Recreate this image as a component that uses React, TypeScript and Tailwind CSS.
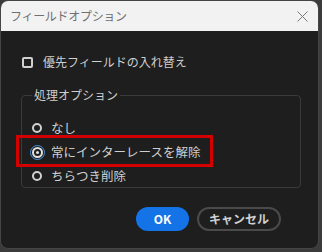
import React, { useState } from 'react';

const options = ['なし', '常にインターレースを解除', 'ちらつき削除'];

const App: React.FC = () => {
    const [swap, setSwap] = useState(false);
    const [mode, setMode] = useState(1);

    return (
        <div className="w-[322px] h-[252px] bg-[#3b3b3b] overflow-hidden font-['Noto_Sans_CJK_JP',sans-serif]">
            <div className="relative w-[319px] h-[249px] flex flex-col rounded-[8px] overflow-hidden border border-[#454545] bg-[#1e1e1e]">
                <div className="h-[30px] shrink-0 bg-[#f2f2f2] flex items-center justify-between pl-[9px] pr-[10px]">
                    <span className="text-[12px] text-[#707070] tracking-[-0.3px]">フィールドオプション</span>
                    <svg width="11" height="11" viewBox="0 0 11 11" className="text-[#7a7a7a]">
                        <path d="M0.5 0.5 L10.5 10.5 M10.5 0.5 L0.5 10.5" stroke="currentColor" strokeWidth="1" />
                    </svg>
                </div>

                <div className="flex-1 flex flex-col px-[20px] pt-[25px]">
                    <label className="flex items-center gap-[10px] cursor-pointer" onClick={() => setSwap(!swap)}>
                        <span className="w-[11px] h-[11px] border-2 border-[#d0d0d0] rounded-[2px] ml-px" />
                        <span className="text-[12px] text-[#cfcfcf] leading-none">優先フィールドの入れ替え</span>
                    </label>

                    <fieldset className="mt-[21px] border border-[#3a3a3a] rounded-[4px] w-[280px] h-[99px] px-[7px] pt-[12px]">
                        <legend className="px-[2px] ml-[3px] text-[12px] text-[#cfcfcf] leading-none">処理オプション</legend>
                        <div className="flex flex-col gap-[8px] pt-[7px]">
                            {options.map((o, i) => (
                                <div key={o} className="flex items-center h-[16px] gap-[6px] cursor-pointer" onClick={() => setMode(i)}>
                                    <span className="w-[16px] h-[16px] flex items-center justify-center">
                                        {mode === i ? (
                                            <span className="w-[15px] h-[15px] rounded-full border-[1.5px] border-[#4a90d9] flex items-center justify-center">
                                                <span className="w-[11px] h-[11px] rounded-full border-2 border-[#e0e0e0] flex items-center justify-center">
                                                    <span className="w-[3px] h-[3px] rounded-full bg-[#e0e0e0]" />
                                                </span>
                                            </span>
                                        ) : (
                                            <span className="w-[10px] h-[10px] rounded-full border-2 border-[#d0d0d0]" />
                                        )}
                                    </span>
                                    <span className="text-[12.5px] text-[#cfcfcf] leading-none">{o}</span>
                                </div>
                            ))}
                        </div>
                    </fieldset>

                    <div className="flex justify-end gap-[8px] mt-[19px] pr-[17px]">
                        <button className="w-[53px] h-[24px] rounded-full bg-[#1473e6] text-white text-[12px] font-bold">OK</button>
                        <button className="w-[84px] h-[24px] rounded-full border-2 border-[#4a4a4a] text-[#d0d0d0] text-[12px] font-bold">キャンセル</button>
                    </div>
                </div>

                <div className="absolute left-[15px] top-[134px] w-[197px] h-[32px] border-[3px] border-[#d40000] pointer-events-none" />
            </div>
        </div>
    );
};

export default App;
